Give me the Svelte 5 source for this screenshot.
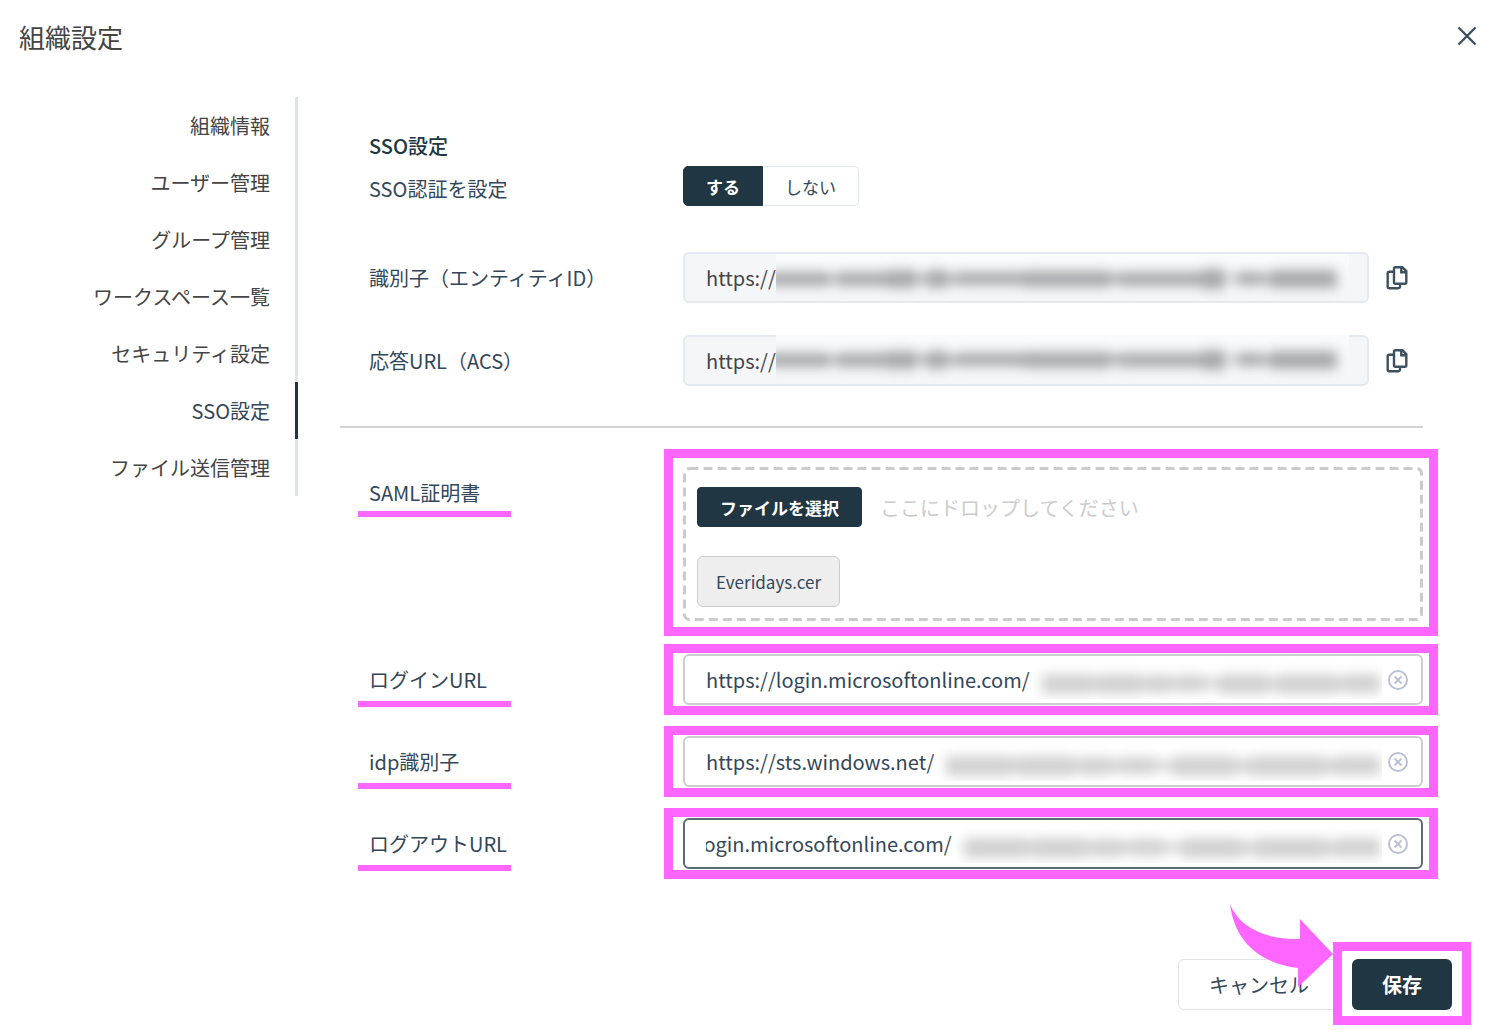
<script>
  const menu = [
    "組織情報",
    "ユーザー管理",
    "グループ管理",
    "ワークスペース一覧",
    "セキュリティ設定",
    "SSO設定",
    "ファイル送信管理",
  ];
  let current = "SSO設定";
  let enabled = true;

  const endpoints = [
    { id: "entity", label: "識別子（エンティティID）", value: "https://", raised: false },
    { id: "acs", label: "応答URL（ACS）", value: "https://", raised: true },
  ];

  let urls = [
    { id: "login", label: "ログインURL", value: "https://login.microsoftonline.com/" },
    { id: "idp", label: "idp識別子", value: "https://sts.windows.net/" },
    { id: "logout", label: "ログアウトURL", value: "https://login.microsoftonline.com/", active: true },
  ];

  // widths of the masked words, and how tall each one is
  const longMask = [
    [64, 14], [8, 6], [52, 14], [30, 18], [12, 7], [20, 18], [10, 8], [70, 13], [90, 16], [10, 9],
    [86, 14], [24, 20], [12, 3], [26, 13], [8, 8], [70, 18],
  ];
  const shortMask = [
    [58, 20], [6, 15], [50, 20], [6, 13], [26, 18], [10, 13], [30, 17], [16, 9], [56, 20],
    [12, 12], [66, 20], [10, 14], [40, 19],
  ];

  function scrollToEnd(node, active) {
    if (active) node.scrollLeft = node.scrollWidth;
  }
</script>

<svelte:head>
  <title>組織設定</title>
</svelte:head>

{#snippet mask(words)}
  <span class="words">
    {#each words as [width, height]}
      <i style={`flex-grow: ${width}; height: ${height}px`}></i>
    {/each}
  </span>
{/snippet}

<div class="dialog">
  <header>
    <h1>組織設定</h1>
    <button class="icon" aria-label="閉じる">
      <svg width="20" height="20" viewBox="0 0 20 20">
        <path d="M1.5 1.5l17 17M18.5 1.5l-17 17" />
      </svg>
    </button>
  </header>

  <div class="body">
    <nav>
      {#each menu as item}
        <a href="#top" class:current={item === current} on:click={() => (current = item)}>{item}</a>
      {/each}
    </nav>

    <main>
      <h2>SSO設定</h2>

      <div class="row first">
        <span class="label" id="sso">SSO認証を設定</span>
        <div class="toggle" role="group" aria-labelledby="sso">
          <button class:on={enabled} aria-pressed={enabled} on:click={() => (enabled = true)}>する</button>
          <button class:on={!enabled} aria-pressed={!enabled} on:click={() => (enabled = false)}>しない</button>
        </div>
      </div>

      <div class="fields">
        {#each endpoints as item}
          <div class="row">
            <label class="label" for={item.id}>{item.label}</label>
            <div class="copyable">
              <div class="field readonly">
                <input id={item.id} value={item.value} readonly />
                <span class="masked" class:raised={item.raised}>{@render mask(longMask)}</span>
              </div>
              <button class="icon copy" aria-label="コピー">
                <svg width="22" height="24" viewBox="0 0 22 24">
                  <path d="M7 5.7H3.200A1.500 1.500 0 0 0 1.700 7.200v13.500A1.500 1.500 0 0 0 3.200 22.200h9.300A1.500 1.500 0 0 0 14 20.700V18" />
                  <path d="M9.500 1.300h6.800L20.300 5v11.200a1.500 1.500 0 0 1-1.500 1.500H9.500A1.500 1.500 0 0 1 8 16.200V2.800a1.500 1.500 0 0 1 1.500-1.500z" />
                  <path d="M15.300 1.500v4.800h5" />
                </svg>
              </button>
            </div>
          </div>
        {/each}
      </div>

      <hr />

      <div class="row">
        <label class="label underlined short" for="certificate">SAML証明書</label>
        <div class="dropzone framed">
          <svg class="dashes" aria-hidden="true"><rect x="1.5" y="1.5" rx="5" /></svg>
          <div class="pick">
            <button class="primary" id="certificate">ファイルを選択</button>
            <span>ここにドロップしてください</span>
          </div>
          <button class="file">Everidays.cer</button>
        </div>
      </div>

      <div class="fields urls">
        {#each urls as item}
          <div class="row">
            <label class="label underlined" for={item.id}>{item.label}</label>
            <div class="field framed" class:active={item.active}>
              <input id={item.id} bind:value={item.value} use:scrollToEnd={item.active} />
              <span class="masked">{@render mask(shortMask)}</span>
              <button class="icon clear" aria-label="クリア">
                <svg width="20" height="20" viewBox="0 0 20 20">
                  <circle cx="10" cy="10" r="9" />
                  <path d="M6.500 6.500l7 7M13.500 6.500l-7 7" />
                </svg>
              </button>
            </div>
          </div>
        {/each}
      </div>
    </main>
  </div>

  <footer>
    <button class="cancel">キャンセル</button>
    <div class="save framed">
      <button class="primary">保存</button>
      <svg class="arrow" width="104" height="84" viewBox="0 0 104 84">
        <path d="M1 1C10 24 36 37 71 36V16l33 35-35 33V65C35 61 6 42 1 1z" />
      </svg>
    </div>
  </footer>
</div>

<style>
  :global(body) {
    margin: 0;
    background: #fff;
  }

  .dialog,
  .dialog button,
  .dialog input {
    font-family: "Noto Sans CJK JP", sans-serif;
    font-size: 20px;
    color: #33475a;
  }

  .dialog {
    overflow: hidden;
  }

  button {
    box-sizing: border-box;
    margin: 0;
    cursor: pointer;
  }

  header {
    display: flex;
    align-items: center;
    justify-content: space-between;
    height: 72px;
    padding: 0 23px 0 19px;
  }

  h1 {
    margin: 0;
    font-size: 26px;
    font-weight: 400;
    color: #444;
  }

  .icon {
    display: flex;
    align-items: center;
    justify-content: center;
    padding: 0;
    border: 0;
    background: none;
  }

  .icon svg {
    fill: none;
    stroke: #3d5060;
    stroke-width: 2.4;
  }

  .body {
    display: flex;
    align-items: flex-start;
    padding-top: 25px;
  }

  nav {
    flex: 0 0 298px;
  }

  nav a {
    display: block;
    padding-right: 25px;
    border-right: 3px solid #dde4ee;
    line-height: 57px;
    text-align: right;
    text-decoration: none;
    color: #444;
  }

  nav a.current {
    border-color: #203643;
    color: #33475a;
  }

  main {
    flex: 1;
    min-width: 0;
    padding: 29px 77px 0 42px;
  }

  h2 {
    margin: 0;
    padding-left: 29px;
    font-size: 20px;
    font-weight: 500;
    line-height: 40px;
    color: #203643;
  }

  .row {
    display: grid;
    grid-template-columns: 314px 1fr;
    align-items: start;
    padding-left: 29px;
  }

  .label {
    position: relative;
    line-height: 51px;
  }

  .first {
    margin-bottom: 40px;
  }

  .first .label {
    line-height: 46px;
  }

  .short {
    margin-top: 4px;
    line-height: 44px;
  }

  .underlined::after {
    content: "";
    position: absolute;
    left: -11px;
    bottom: -2px;
    width: 153px;
    height: 6px;
    background: #ff66ff;
  }

  .toggle {
    display: flex;
  }

  .toggle button {
    height: 40px;
    padding: 0 22px;
    border: 1px solid #e2e6ee;
    border-radius: 0 5px 5px 0;
    background: #fff;
    font-size: 17px;
  }

  .toggle button:first-child {
    border-radius: 5px 0 0 5px;
  }

  .toggle button + button {
    border-left: 0;
  }

  .toggle .on,
  .primary {
    border: 1px solid #203643;
    background: #203643;
    font-weight: 700;
    color: #fff;
  }

  .fields {
    display: grid;
    gap: 32px;
  }

  .urls {
    gap: 31px;
    margin-top: 33px;
  }

  .copyable {
    display: flex;
  }

  .field {
    box-sizing: border-box;
    display: flex;
    flex: 1;
    align-items: center;
    min-width: 0;
    height: 51px;
    padding: 0 13px 0 21px;
    border: 2px solid #cbcdcf;
    border-radius: 6px;
    background: #fff;
  }

  .field.active {
    border-color: #5b6b76;
  }

  .readonly {
    padding-right: 18px;
    border-color: #e5e9f1;
    background: #f5f6fa;
  }

  input {
    field-sizing: content;
    height: 40px;
    padding: 0;
    border: 0;
    outline: 0;
    background: none;
  }

  .readonly input {
    color: #444;
  }

  .active input {
    width: 246px;
  }

  .masked {
    display: flex;
    flex: 1;
    align-self: stretch;
    align-items: center;
    min-width: 0;
    margin: 4px 6px 4px 4px;
    padding: 8px 2px 0 8px;
    overflow: hidden;
  }

  .readonly .masked {
    margin: 0;
    padding: 2px 12px 0 0;
    background: linear-gradient(#fafbfc, #f5f6fa);
  }

  .readonly .raised {
    margin-top: -2px;
    padding-top: 0;
  }

  .words {
    display: flex;
    flex: 1;
    align-items: center;
    filter: blur(6px);
  }

  .words i {
    background: #d2d2d2;
  }

  .readonly .words {
    margin-left: -8px;
  }

  .readonly .words i {
    background: #a6a8aa;
  }

  .copy {
    width: 56px;
  }

  .copyable {
    margin-right: -2px;
  }

  .clear svg {
    stroke: #b9c1d6;
    stroke-width: 2;
  }

  hr {
    height: 2px;
    margin: 40px 0 39px;
    border: 0;
    background: #d3d3d3;
  }

  .dropzone {
    padding: 20px 14px 14px;
  }

  .dashes {
    position: absolute;
    inset: 0;
    width: 100%;
    height: 100%;
    pointer-events: none;
  }

  .dashes rect {
    width: calc(100% - 3px);
    height: calc(100% - 3px);
    fill: none;
    stroke: #cbcbcb;
    stroke-width: 3;
    stroke-dasharray: 9 5;
  }

  .pick {
    display: flex;
    align-items: center;
    gap: 18px;
    margin-bottom: 29px;
    color: #ccc;
  }

  .dialog .pick .primary {
    height: 40px;
    padding: 0 22px;
    border-radius: 4px;
    font-size: 17px;
  }

  .dialog .toggle button {
    font-size: 17px;
  }

  .dialog .toggle .on {
    color: #fff;
  }

  .file {
    height: 51px;
    padding: 0 18px;
    border: 1px solid #ccc;
    border-radius: 6px;
    background: #eee;
  }

  .dialog .file {
    font-size: 17px;
  }

  .framed {
    position: relative;
  }

  .framed::after {
    content: "";
    position: absolute;
    inset: -12px -17px -12px -21px;
    border: 9px solid #ff66ff;
    pointer-events: none;
  }

  .dropzone::after {
    inset: -18px -15px -15px -19px;
  }

  footer {
    display: flex;
    justify-content: flex-end;
    gap: 12px;
    padding: 90px 48px 20px;
  }

  .cancel,
  .save button {
    height: 51px;
    padding: 0 30px;
    border: 1px solid #e2e4ea;
    border-radius: 6px;
    background: #fff;
  }

  .save .primary {
    border: 0;
    background: #203643;
  }

  .dialog .primary {
    color: #fff;
  }

  .save::after {
    inset: -17px -19px -15px;
  }

  .arrow {
    position: absolute;
    right: 119px;
    bottom: 23px;
    fill: #ff66ff;
  }
</style>
